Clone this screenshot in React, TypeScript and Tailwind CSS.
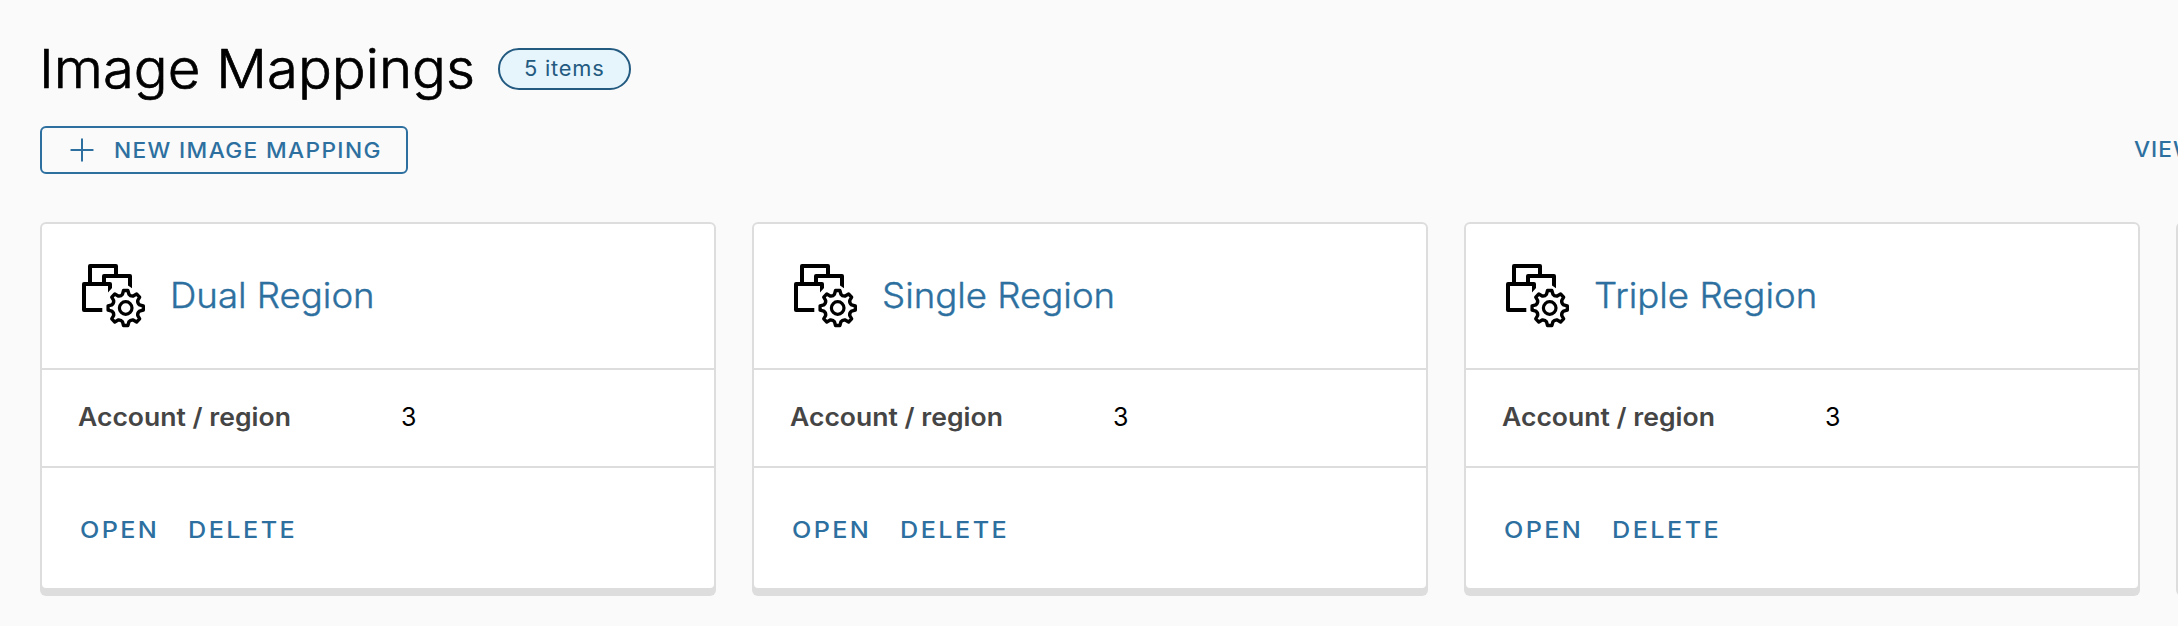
const GEAR = { cx: 47.7, cy: 48, tip: 17.7, base: 14.2, valley: 12.6 };

function gearPath(): string {
  const at = (r: number, deg: number) => {
    const a = ((deg - 90) * Math.PI) / 180;
    return `${(GEAR.cx + r * Math.cos(a)).toFixed(2)} ${(GEAR.cy + r * Math.sin(a)).toFixed(2)}`;
  };
  let d = "";
  for (let i = 0; i < 8; i++) {
    const t = i * 45;
    d += `${i === 0 ? "M" : "L"}${at(GEAR.tip, t - 7)} L${at(GEAR.tip, t + 7)} L${at(GEAR.base, t + 13)} `;
    d += `Q${at(GEAR.valley, t + 22.5)} ${at(GEAR.base, t + 32)} `;
  }
  return d + "Z";
}

const GEAR_PATH = gearPath();

function MappingIcon() {
  return (
    <svg
      viewBox="0 0 72 72"
      className="size-[72px] shrink-0"
      fill="none"
      stroke="#000"
      strokeWidth="4"
      strokeLinejoin="round"
      aria-hidden="true"
    >
      <path d="M12 22V6H38V15" />
      <path d="M26 22V16H52V23" />
      <path d="M50 22H54V28.2L50 25.4Z" fill="#000" stroke="none" />
      <path d="M24.3 50H6V24H32V26" />
      <path d="M30 24H34V28L30 32.5Z" fill="#000" stroke="none" />
      <path d={GEAR_PATH} strokeWidth="3.4" />
      <circle cx="47.7" cy="48" r="6.3" strokeWidth="3.2" />
    </svg>
  );
}

const CARD =
  "flex h-[368px] w-[676px] shrink-0 flex-col rounded-md border-2 border-[#ddd] bg-white shadow-[0_6px_0_0_#ddd]";

function MappingCard({ name, count }: { name: string; count: number }) {
  return (
    <article className={CARD}>
      <header className="flex h-36 items-center pl-9">
        <MappingIcon />
        <h2 className="ml-[20px] origin-left scale-x-[1.046] pb-[2px] text-[35px] leading-none font-light whitespace-nowrap text-[#2d70a0] [-webkit-text-stroke:0.4px_#2d70a0]">
          {name}
        </h2>
      </header>
      <div className="flex h-[100px] items-center border-y-2 border-[#ddd] pb-[2px] pl-9 text-[25px] leading-none">
        <span className="w-[323px]">
          <span className="inline-block origin-left scale-x-[1.062] font-semibold text-[#454545]">Account / region</span>
        </span>
        <span className="text-black">{count}</span>
      </div>
      <footer className="flex flex-1 items-center pt-[5px] pl-[38px] text-[22.5px] leading-none font-medium text-[#2d70a0]">
        <button className="w-[108px] text-left">
          <span className="inline-block origin-left scale-x-112 tracking-[2.1px]">OPEN</span>
        </button>
        <button className="text-left">
          <span className="inline-block origin-left scale-x-112 tracking-[2.2px]">DELETE</span>
        </button>
      </footer>
    </article>
  );
}

const MAPPINGS = [
  { name: "Dual Region", count: 3 },
  { name: "Single Region", count: 3 },
  { name: "Triple Region", count: 3 },
];

export default function App() {
  return (
    <main className="h-[626px] w-full overflow-hidden bg-[#fafafa] pt-[38px] pl-10 font-['Inter',sans-serif]">
      <div className="flex h-[62px] items-center">
        <div className="-ml-px w-[459px]">
          <h1 className="inline-block origin-left scale-x-[1.043] text-[54px] leading-none font-light whitespace-nowrap text-black [-webkit-text-stroke:0.7px_#000]">
            Image Mappings
          </h1>
        </div>
        <span className="flex h-[42px] w-[133px] items-center rounded-full border-2 border-[#235a80] bg-[#e6f4fc] pb-px pl-[24px] text-[21px] leading-none whitespace-nowrap text-[#235a80]">
          <span className="origin-left scale-x-104 tracking-[0.75px]">5 items</span>
        </span>
      </div>
      <div className="mt-[26px] flex h-12 w-[2200px] items-center justify-between">
        <button className="flex h-12 w-[368px] items-center rounded-md border-2 border-[#2d70a0] pl-[28px] text-[21px] leading-none font-medium whitespace-nowrap text-[#2d70a0]">
          <svg viewBox="0 0 24 24" className="mr-[20px] size-6 shrink-0" fill="none" stroke="currentColor" strokeWidth="2" strokeLinecap="round" aria-hidden="true">
            <path d="M12 1.3V22.7M1.3 12H22.7" />
          </svg>
          <span className="origin-left scale-x-108 tracking-[1.26px]">NEW IMAGE MAPPING</span>
        </button>
        <button className="w-[106px] pb-px text-left text-[21px] leading-none font-medium whitespace-nowrap text-[#2d70a0]">
          <span className="inline-block origin-left scale-x-108 tracking-[0.95px]">VIEW</span>
        </button>
      </div>
      <div className="mt-12 flex gap-9">
        {MAPPINGS.map((m) => (
          <MappingCard key={m.name} {...m} />
        ))}
        <article className={CARD} />
      </div>
    </main>
  );
}
